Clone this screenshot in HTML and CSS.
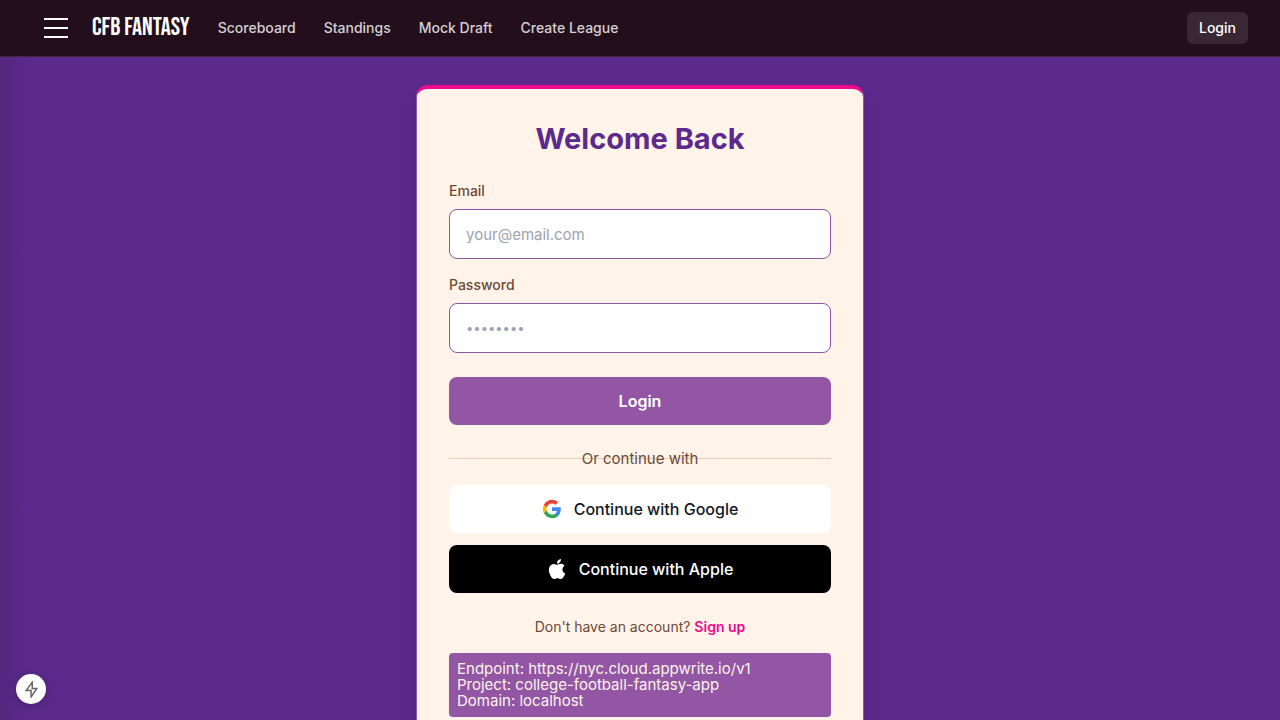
FILE: index.html
```html
<!DOCTYPE html>
<html lang="en">
<head>
<meta charset="utf-8">
<meta name="viewport" content="width=device-width, initial-scale=1">
<title>CFB Fantasy – Login</title>
<link rel="stylesheet" href="styles.css">
</head>
<body>
<header class="topbar">
  <button class="menu" type="button" aria-label="Open menu"><span></span><span></span><span></span></button>
  <a class="brand" href="#">CFB FANTASY</a>
  <nav class="nav">
    <a href="#">Scoreboard</a>
    <a href="#">Standings</a>
    <a href="#">Mock Draft</a>
    <a href="#">Create League</a>
  </nav>
  <a class="topbar-login" href="#">Login</a>
</header>
<main class="page">
  <section class="card">
    <h1>Welcome Back</h1>
    <form class="form">
      <div class="field">
        <label for="email">Email</label>
        <input id="email" type="email" placeholder="your@email.com">
      </div>
      <div class="field">
        <label for="password">Password</label>
        <input id="password" type="password" placeholder="••••••••">
      </div>
      <button class="btn btn-primary" type="submit">Login</button>
    </form>
    <div class="divider"><span>Or continue with</span></div>
    <div class="providers">
      <button class="btn btn-google" type="button">
        <svg class="icon" viewBox="0 0 24 24" aria-hidden="true">
          <path fill="#4285F4" d="M22.56 12.25c0-.78-.07-1.53-.2-2.25H12v4.26h5.92c-.26 1.37-1.04 2.53-2.21 3.31v2.77h3.57c2.08-1.92 3.28-4.74 3.28-8.09z"/>
          <path fill="#34A853" d="M12 23c2.97 0 5.46-.98 7.28-2.66l-3.57-2.77c-.98.66-2.23 1.06-3.71 1.06-2.86 0-5.29-1.93-6.16-4.53H2.18v2.84C3.99 20.53 7.7 23 12 23z"/>
          <path fill="#FBBC05" d="M5.84 14.09c-.22-.66-.35-1.36-.35-2.09s.13-1.43.35-2.09V7.07H2.18C1.43 8.55 1 10.22 1 12s.43 3.45 1.18 4.93l3.66-2.84z"/>
          <path fill="#EA4335" d="M12 5.38c1.62 0 3.06.56 4.21 1.64l3.15-3.15C17.45 2.09 14.97 1 12 1 7.7 1 3.99 3.47 2.18 7.07l3.66 2.84c.87-2.6 3.3-4.53 6.16-4.53z"/>
        </svg>
        Continue with Google
      </button>
      <button class="btn btn-apple" type="button">
        <svg class="icon" viewBox="0 0 24 24" fill="currentColor" aria-hidden="true">
          <path d="M12.152 6.896c-.948 0-2.415-1.078-3.96-1.04-2.04.027-3.91 1.183-4.961 3.014-2.117 3.675-.546 9.103 1.519 12.09 1.013 1.454 2.208 3.09 3.792 3.039 1.52-.065 2.09-.987 3.935-.987 1.831 0 2.35.987 3.96.948 1.637-.026 2.676-1.48 3.676-2.948 1.156-1.688 1.636-3.325 1.662-3.415-.039-.013-3.182-1.221-3.22-4.857-.026-3.04 2.48-4.494 2.597-4.559-1.429-2.09-3.623-2.324-4.39-2.376-2-.156-3.675 1.09-4.61 1.09zM15.53 3.83c.843-1.012 1.4-2.427 1.245-3.83-1.207.052-2.662.805-3.532 1.818-.78.896-1.454 2.338-1.273 3.714 1.338.104 2.715-.688 3.559-1.701"/>
        </svg>
        Continue with Apple
      </button>
    </div>
    <p class="signup">Don't have an account? <a href="#">Sign up</a></p>
    <div class="debug">
      <div>Endpoint: https://nyc.cloud.appwrite.io/v1</div>
      <div>Project: college-football-fantasy-app</div>
      <div>Domain: localhost</div>
    </div>
  </section>
</main>
<button class="bolt" type="button" aria-label="Developer tools">
  <svg viewBox="0 0 16 16" aria-hidden="true"><path d="M8.7 1 3 9h4.6v6L13 7H8.7z" fill="none" stroke="#666" stroke-width="1.4" stroke-linejoin="miter"/></svg>
</button>
</body>
</html>
```
FILE: styles.css
```css
*, *::before, *::after { box-sizing: border-box; }

html { scrollbar-width: none; }

body {
  margin: 0;
  min-height: 100vh;
  background: #5b2a8c linear-gradient(to right, #53277f, #5b2a8c 30px);
  font-family: Inter, "Liberation Sans", sans-serif;
  font-size: 15px;
  line-height: 24px;
}

a { color: inherit; text-decoration: none; }
button, input { font: inherit; }

.topbar {
  display: flex;
  align-items: center;
  height: 57px;
  padding: 0 32px 0 44px;
  background: #230f1c;
  border-bottom: 1px solid #3e2a3a;
  color: #fff;
}

.menu {
  display: grid;
  gap: 7px;
  width: 24px;
  margin-right: 24px;
  padding: 0;
  border: 0;
  background: none;
}
.menu span { height: 2px; background: #fff; }

.brand {
  margin-right: 28px;
  font: 400 25px/28px "Bebas Neue", "Liberation Sans Narrow", "Liberation Sans", sans-serif;
  white-space: nowrap;
}

.nav {
  display: flex;
  gap: 28px;
  font-size: 14px;
  font-weight: 500;
  line-height: 20px;
  color: #d4cfd2;
}

.topbar-login {
  margin-left: auto;
  padding: 6px 12px;
  border-radius: 6px;
  background: #392733;
  font-size: 14px;
  font-weight: 500;
  line-height: 20px;
}

.page { display: flex; justify-content: center; padding: 28px 16px; }

.card {
  width: 100%;
  max-width: 448px;
  padding: 32px;
  border: 1px solid #9256a4;
  border-top: 4px solid #f00b8c;
  border-radius: 12px;
  background: #fff3ea;
  box-shadow: 0 10px 15px rgba(40, 10, 70, 0.15);
  color: #6b4a36;
}

h1 {
  margin: 0 0 24px;
  color: #5b2a8c;
  font-size: 29px;
  font-weight: 700;
  line-height: 36px;
  text-align: center;
}

.form { display: grid; gap: 16px; }
.field { display: grid; gap: 8px; }
.field label { font-size: 14px; font-weight: 500; line-height: 20px; }
.field input {
  width: 100%;
  height: 50px;
  padding: 12px 16px;
  border: 1px solid #9256a4;
  border-radius: 8px;
  background: #fff;
}
.field input::placeholder { color: #9ca3af; opacity: 1; }
.field input[type="password"] { font-size: 13px; }

.btn {
  display: flex;
  align-items: center;
  justify-content: center;
  gap: 12px;
  width: 100%;
  height: 48px;
  padding: 0;
  border: 0;
  border-radius: 8px;
  font-size: 16px;
  font-weight: 500;
}
.btn-primary { margin-top: 8px; background: #9256a4; color: #fff; font-weight: 600; }
.btn-google { background: #fff; color: #111827; }
.btn-apple { background: #000; color: #fff; }
.icon { width: 20px; height: 20px; }

.divider {
  display: grid;
  align-items: center;
  margin: 24px 0 16px;
  line-height: 20px;
  text-align: center;
}
.divider::before, .divider span { grid-area: 1 / 1; }
.divider::before { content: ""; height: 2px; border-top: 1px solid #e8cdb9; }
.divider span { z-index: 1; }

.providers { display: grid; gap: 12px; }

.signup { margin: 24px 0 16px; font-size: 14px; line-height: 20px; text-align: center; }
.signup a { color: #f00b8c; font-weight: 600; }

.debug {
  padding: 8px;
  border-radius: 4px;
  background: #9256a4;
  color: #fff3ea;
  line-height: 16px;
}

.bolt {
  position: fixed;
  left: 16px;
  bottom: 16px;
  display: grid;
  place-items: center;
  width: 30px;
  height: 30px;
  padding: 0;
  border: 0;
  border-radius: 50%;
  background: #fff;
  box-shadow: 0 2px 8px rgba(0, 0, 0, 0.2);
}
.bolt svg { width: 17px; height: 17px; }
```
